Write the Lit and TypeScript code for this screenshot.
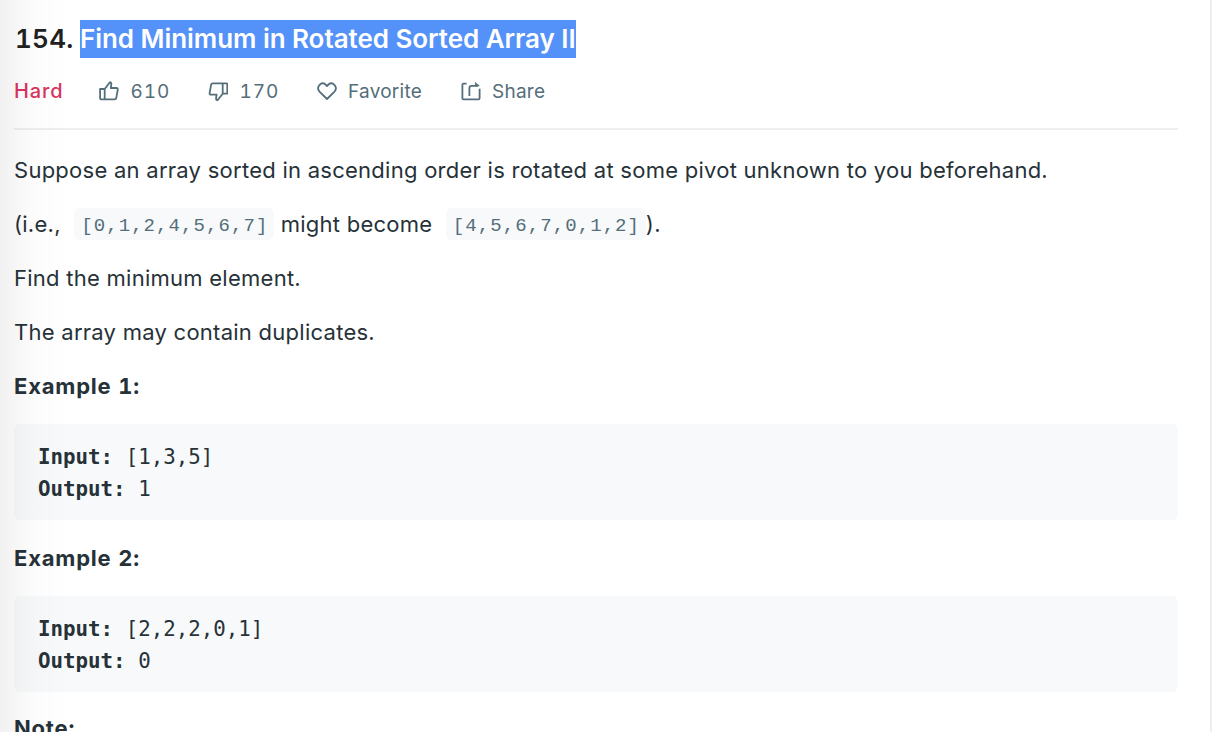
import { LitElement, html, css, svg } from "lit";
import { customElement } from "lit/decorators.js";

const icons = {
  up: svg`<path d="M1.1 8h4.6v10.4H2.2a1.1 1.1 0 0 1-1.1-1.1zM5.7 8L10.9 1.2q1.7.5 1.4 2.2L11.8 7h5.6q1.5.1 1.4 1.5l-1.6 8.8q-.3 1.1-1.5 1.1H5.7"/>`,
  down: svg`<path transform="translate(.4 .7)" d="M18.9 12h-4.6V1.6h3.5a1.1 1.1 0 0 1 1.1 1.1zM14.3 12L9.1 18.6q-1.7-.5-1.4-2.2L8.2 13H2.6q-1.5-.1-1.4-1.5l1.6-8.8q.3-1.1 1.5-1.1h10"/>`,
  heart: svg`<path d="M10 18L2.5 10.6C-1.3 6.3 4.1-.1 8.5 3.5L10 5l1.5-1.5c4.4-3.6 9.8 2.8 6 7.1z"/>`,
  share: svg`<path d="M5.6 2.6H2.5Q1.4 2.6 1.4 3.7v13.6q0 1.1 1.1 1.1h15q1.1 0 1.1-1.1V7.8M8.4 15V7q0-2.2 2.2-2.2h6.6"/><path d="M14.3 1.4v3.4h4z" fill="currentColor" stroke-width=".6"/>`,
};
const icon = (k: keyof typeof icons) =>
  html`<svg class="icon" viewBox="0 0 20 20">${icons[k]}</svg>`;

@customElement("app-root")
export class AppRoot extends LitElement {
  static styles = css`
    :host { display: block; height: 732px; overflow: hidden; position: relative; background: #fff;
      font-family: Inter, sans-serif; color: #263238; }
    .panel { box-sizing: border-box; width: 1212px; height: 732px; overflow: hidden;
      padding: 20px 32px 0 14px; border-right: 2px solid #eee; }
    .shade { position: absolute; left: 0; top: 0; width: 68px; height: 732px; pointer-events: none;
      background: linear-gradient(to right, rgba(0,0,0,.055), rgba(0,0,0,.015) 45%, rgba(0,0,0,0)); }
    .title { display: flex; height: 38px; line-height: 38px; font-size: 26px; font-weight: 600; color: #212121; white-space: pre; }
    .num, .w1, .w2, .b { font-variant-numeric: tabular-nums; }
    .num { width: 66px; box-sizing: border-box; padding-left: 1px; letter-spacing: .3px; }
    .sel { background: #5491f9; color: #fff; width: 496px; letter-spacing: -0.05px; }
    .meta { display: flex; height: 72px; box-sizing: border-box; padding-top: 17px; line-height: 33px;
      font-size: 19px; letter-spacing: .25px; color: #546e7a; border-bottom: 2px solid #eee; margin-bottom: 24px; }
    .hard { width: 85px; color: #d9345f; font-weight: 500; font-size: 20px; letter-spacing: .9px; }
    .act { display: flex; align-items: center; height: 33px; gap: 11px; }
    .w1, .w2 { width: 109px; letter-spacing: .9px; gap: 11.5px; }
    .w3 { width: 144px; }
    .icon { width: 20px; height: 20px; margin-top: -2px; fill: none; stroke: currentColor; stroke-width: 1.8; stroke-linejoin: round; flex: none; }
    p { margin: 0 0 22px; height: 32px; line-height: 32px; font-size: 22px; letter-spacing: .26px; white-space: pre; }
    .b { font-weight: 650; letter-spacing: .8px; }
    code { display: inline-block; height: 32px; line-height: 36px; box-sizing: border-box; width: 200px; margin-left: 7px; padding-left: 7px; border-radius: 6px;
      background: #f7f9fa; color: #546e7a; font-family: "Liberation Mono", monospace; font-size: 19px; letter-spacing: 1.08px; vertical-align: top; }
    pre { margin: 0 0 22px; box-sizing: border-box; height: 96px; width: 1164px; padding: 17px 24px 15px; border-radius: 6px; background: #f7f9fa;
      font: 20.8px/32px "DejaVu Sans Mono", monospace; }
    .last { margin-top: -2px; }
  `;
  render() {
    return html`<div class="panel">
      <div class="title"><span class="num">154.</span><span class="sel">Find Minimum in Rotated Sorted Array II</span></div>
      <div class="meta"><span class="hard">Hard</span>
        <span class="act w1">${icon("up")}<span>610</span></span>
        <span class="act w2">${icon("down")}<span>170</span></span>
        <span class="act w3">${icon("heart")}<span>Favorite</span></span>
        <span class="act">${icon("share")}<span>Share</span></span></div>
      <p>Suppose an array sorted in ascending order is rotated at some pivot unknown to you beforehand.</p>
      <p>(i.e., <code>[0,1,2,4,5,6,7]</code> might become <code>[4,5,6,7,0,1,2]</code>).</p>
      <p>Find the minimum element.</p>
      <p>The array may contain duplicates.</p>
      <p class="b">Example 1:</p>
      <pre><b>Input: </b>[1,3,5]
<b>Output: </b>1</pre>
      <p class="b">Example 2:</p>
      <pre><b>Input: </b>[2,2,2,0,1]
<b>Output: </b>0</pre>
      <p class="b last">Note:</p>
    </div><div class="shade"></div>`;
  }
}
